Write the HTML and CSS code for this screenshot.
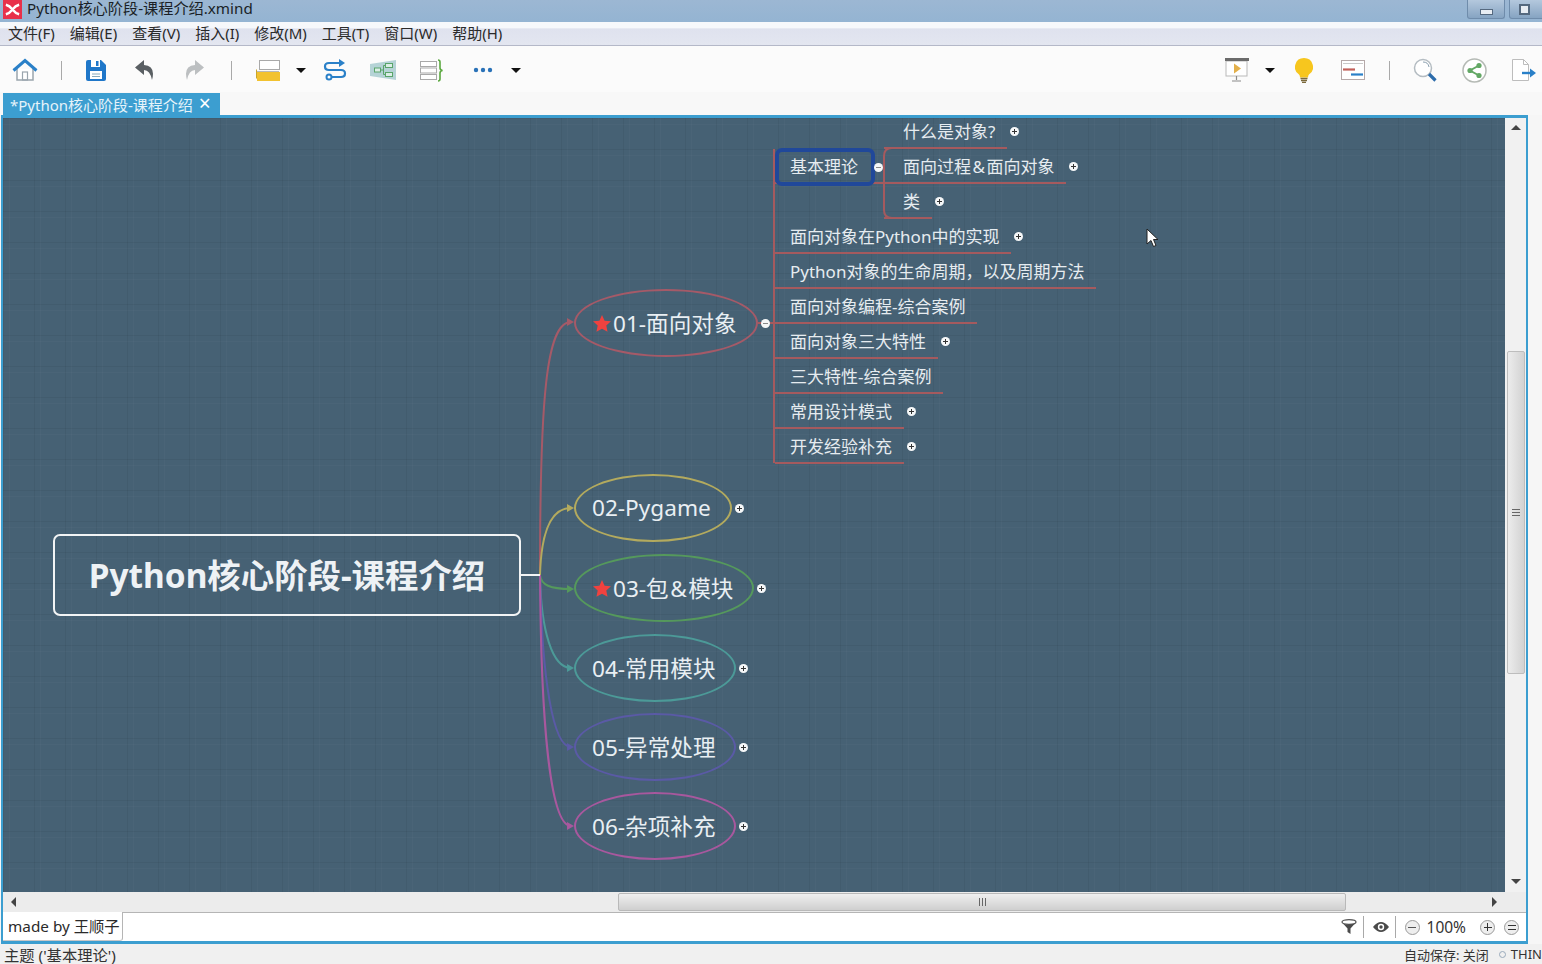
FILE: index.html
```html
<!DOCTYPE html>
<html lang="en">
<head>
  <meta charset="UTF-8">
  <title>Python核心阶段-课程介绍.xmind</title>
  <link rel="stylesheet" href="styles.css">
</head>
<body>

<div class="app">

  <header class="titlebar">
    <svg class="app-logo" viewBox="0 0 20 20">
      <rect width="20" height="20" fill="#e8304a"/>
      <path d="M3 5 Q7 6 10 10 Q13 6 17 5 M3 15 Q7 14 10 10 Q13 14 17 15" fill="none" stroke="#fff" stroke-width="2.600"/>
    </svg>
    <span class="title-text">Python核心阶段-课程介绍.xmind</span>
    <div class="win-btn win-min"><i></i></div>
    <div class="win-btn win-max"><i></i></div>
  </header>

  <nav class="menubar">
    <a>文件(F)</a>
    <a>编辑(E)</a>
    <a>查看(V)</a>
    <a>插入(I)</a>
    <a>修改(M)</a>
    <a>工具(T)</a>
    <a>窗口(W)</a>
    <a>帮助(H)</a>
  </nav>

  <div class="toolbar">
    <div class="tools tools-left">
      <svg width="26" height="24" viewBox="0 0 26 24">
        <path d="M5 11v11h16V11" fill="#fff" stroke="#9aa5ad" stroke-width="1.5"/>
        <rect x="10.500" y="14" width="5" height="8" fill="none" stroke="#9aa5ad" stroke-width="1.2"/>
        <path d="M1.500 12.500 13 2.500l11.500 10" fill="none" stroke="#2a80c8" stroke-width="3"/>
      </svg>
      <i class="sep"></i>
      <svg width="20" height="21" viewBox="0 0 20 21">
        <path d="M0 2q0-2 2-2h13l5 5v14q0 2-2 2H2q-2 0-2-2z" fill="#1f77c9"/>
        <rect x="5" y="0" width="9" height="7" fill="#fff"/>
        <rect x="10" y="1" width="2.500" height="5" fill="#1f77c9"/>
        <rect x="4" y="11" width="12" height="8" fill="#fff"/>
        <path d="M6 14h8M6 16.500h8" stroke="#8ab" stroke-width="1"/>
      </svg>
      <svg width="20" height="22" viewBox="0 0 20 22">
        <path d="M9 1 0 8.500 9 16v-5q6 0 8 10 4-14-8-15z" fill="#5a5f63"/>
      </svg>
      <svg width="20" height="22" viewBox="0 0 20 22">
        <path d="M11 1l9 7.500L11 16v-5q-6 0-8 10Q-1 7 11 6z" fill="#bcbfc1"/>
      </svg>
      <i class="sep"></i>
      <svg width="24" height="21" viewBox="0 0 24 21">
        <rect x="3.500" y=".5" width="20" height="9" fill="#fff" stroke="#a9a9a9"/>
        <path d="M.5 9.500v9" stroke="#c9a52c"/>
        <rect x="1" y="12" width="23" height="9" fill="#f2c230"/>
        <path d="M1 11.500h22" stroke="#b9b9b9"/>
      </svg>
      <i class="caret"></i>
      <svg width="24" height="22" viewBox="0 0 24 22">
        <path d="M20 4H6q-4 0-4 3.500T6 11h12q4 0 4 3.500T18 18H9" fill="none" stroke="#2a80c8" stroke-width="2.200"/>
        <path d="M16 0l6 4-6 4z" fill="#2a80c8"/>
        <circle cx="6" cy="18" r="2.500" fill="#fff" stroke="#2a80c8" stroke-width="2"/>
      </svg>
      <svg width="26" height="20" viewBox="0 0 26 20">
        <path d="M0 4 26 0v20L0 16z" fill="#b5d3d6"/>
        <g fill="#dbeee6" stroke="#5aa56a">
          <rect x="4.500" y="8" width="6" height="4"/>
          <rect x="15.500" y="3.500" width="7" height="4"/>
          <rect x="15.500" y="12.500" width="7" height="4"/>
          <path d="M10.500 10h3M13.500 5.500v9M13.500 5.500h2M13.500 14.500h2" fill="none"/>
        </g>
      </svg>
      <svg width="24" height="23" viewBox="0 0 24 23">
        <g fill="#fff" stroke="#a9a9a9">
          <rect x=".5" y="2.500" width="16" height="5"/>
          <rect x=".5" y="9" width="16" height="5"/>
          <rect x=".5" y="15.500" width="16" height="5"/>
        </g>
        <path d="M18 1q2 0 2 2v6q0 2 2.500 2.500Q20 12 20 14v6q0 2-2 2" fill="none" stroke="#5aa83f" stroke-width="1.600"/>
      </svg>
      <svg width="20" height="6" viewBox="0 0 20 6">
        <circle cx="3" cy="3" r="2.200" fill="#2a72b8"/>
        <circle cx="10" cy="3" r="2.200" fill="#2a72b8"/>
        <circle cx="17" cy="3" r="2.200" fill="#2a72b8"/>
      </svg>
      <i class="caret"></i>
    </div>

    <div class="tools tools-right">
      <svg width="24" height="24" viewBox="0 0 24 24">
        <rect x="1" y="3" width="21" height="15" fill="#fff" stroke="#b9b9b9"/>
        <rect y="0" width="24" height="3" fill="#6b6b6b"/>
        <path d="M9 5.500 16 10.500l-7 5z" fill="#e3b04b"/>
        <path d="M11.500 18v4M7 23h9" stroke="#8a8a8a" stroke-width="1.200"/>
      </svg>
      <i class="caret"></i>
      <svg width="18" height="25" viewBox="0 0 18 25">
        <path d="M9 0a9 9 0 0 1 5 16.500q-1 1-1 3H5q0-2-1-3A9 9 0 0 1 9 0z" fill="#f7c61e"/>
        <path d="M5.500 20.500h7M6 22.500h6M7 24.500h4" stroke="#7c6a3c" stroke-width="1.400"/>
      </svg>
      <svg width="24" height="20" viewBox="0 0 24 20">
        <rect x=".5" y=".5" width="23" height="19" fill="#fff" stroke="#b5a9a9"/>
        <path d="M2 3.500h20" stroke="#c9c9c9"/>
        <path d="M2 9.500h12" stroke="#c2605a" stroke-width="2.200"/>
        <path d="M10 14.500h12" stroke="#2a80c8" stroke-width="2.200"/>
      </svg>
      <i class="sep"></i>
      <svg width="24" height="24" viewBox="0 0 24 24">
        <circle cx="10" cy="10" r="8.500" fill="#fff" stroke="#b4bcc2" stroke-width="1.500"/>
        <path d="M10 4a6 6 0 0 1 6 5" fill="none" stroke="#8ba0b0"/>
        <path d="M16 16l6.500 6.500" stroke="#2d6cab" stroke-width="3.200"/>
      </svg>
      <svg width="25" height="25" viewBox="0 0 25 25">
        <circle cx="12.500" cy="12.500" r="11.500" fill="#fff" stroke="#b5bab5" stroke-width="1.500"/>
        <path d="M17 7.500 8 12.500l9 5" fill="none" stroke="#63a865" stroke-width="2"/>
        <circle cx="17" cy="7.500" r="2.600" fill="#63a865"/>
        <circle cx="8" cy="12.500" r="2.600" fill="#63a865"/>
        <circle cx="17" cy="17.500" r="2.600" fill="#63a865"/>
      </svg>
      <svg width="24" height="22" viewBox="0 0 24 22">
        <path d="M.5.500h11l5 5v16H.500z" fill="#fff" stroke="#bdbdbd"/>
        <path d="M11.500.5v5h5" fill="none" stroke="#bdbdbd"/>
        <path d="M10 14h10" stroke="#2a80c8" stroke-width="2.400"/>
        <path d="M18 9.500l6 4.500-6 4.500z" fill="#2a80c8"/>
      </svg>
    </div>
  </div>

  <div class="tabbar">
    <div class="tab">*Python核心阶段-课程介绍<span class="tab-close">×</span></div>
  </div>

  <main class="frame">
    <div class="work-row">
      <div class="canvas">
        <svg class="links" viewBox="3 118 1502 774">
          <g fill="none" stroke-width="2">
            <path d="M540 575C540 400 546 322 571 322" stroke="#a55a68"/>
            <path d="M540 575C541 540 548 508 571 508" stroke="#b3aa5e"/>
            <path d="M540 575C541 585 550 589 571 589" stroke="#55995c"/>
            <path d="M540 575C541 630 552 668 571 668" stroke="#4c9a98"/>
            <path d="M540 575C542 680 553 747 571 747" stroke="#5a5aa6"/>
            <path d="M540 575C541 720 550 826 571 826" stroke="#a8589e"/>
            <path d="M521 575H540" stroke="#f2f4f5"/>
            <path d="M758 323H773" stroke="#a55a5e"/>
            <path d="M892 148Q884 148 884 156V210Q884 218 892 218" stroke="#a55a5e"/>
            <path d="M773 183H890" stroke="#a55a5e"/>
          </g>
          <g>
            <path d="M574 322l-7-4v8z" fill="#a55a68"/>
            <path d="M574 508l-7-4v8z" fill="#b3aa5e"/>
            <path d="M574 589l-7-4v8z" fill="#55995c"/>
            <path d="M574 668l-7-4v8z" fill="#4c9a98"/>
            <path d="M574 747l-7-4v8z" fill="#5a5aa6"/>
            <path d="M574 826l-7-4v8z" fill="#a8589e"/>
          </g>
        </svg>

        <div class="root-topic">Python核心阶段-课程介绍</div>

        <div class="branch b01">
          <svg class="star" viewBox="0 0 20 19"><path d="M10 0l2.900 6.300 7.100.8-5.200 4.700 1.400 7L10 15.300 3.800 18.800l1.400-7L0 7.100l7.100-.8z"/></svg>
          <span>01-面向对象</span>
          <i class="fold fold-minus"></i>
        </div>
        <div class="branch b02"><span>02-Pygame</span><i class="fold"></i></div>
        <div class="branch b03">
          <svg class="star" viewBox="0 0 20 19"><path d="M10 0l2.900 6.300 7.100.8-5.200 4.700 1.400 7L10 15.300 3.800 18.800l1.400-7L0 7.100l7.100-.8z"/></svg>
          <span>03-包<span class="amp">&amp;</span>模块</span>
          <i class="fold"></i>
        </div>
        <div class="branch b04"><span>04-常用模块</span><i class="fold"></i></div>
        <div class="branch b05"><span>05-异常处理</span><i class="fold"></i></div>
        <div class="branch b06"><span>06-杂项补充</span><i class="fold"></i></div>

        <div class="sub-list">
          <div class="sub sub-selected"><span class="sub-label">基本理论</span><i class="fold fold-minus"></i></div>
          <div class="sub"><span class="sub-label">面向对象在Python中的实现</span><i class="fold"></i></div>
          <div class="sub"><span class="sub-label">Python对象的生命周期，以及周期方法</span></div>
          <div class="sub"><span class="sub-label">面向对象编程-综合案例</span></div>
          <div class="sub"><span class="sub-label">面向对象三大特性</span><i class="fold"></i></div>
          <div class="sub"><span class="sub-label">三大特性-综合案例</span></div>
          <div class="sub"><span class="sub-label">常用设计模式</span><i class="fold"></i></div>
          <div class="sub"><span class="sub-label">开发经验补充</span><i class="fold"></i></div>
        </div>

        <div class="leaf-list">
          <div class="sub"><span class="sub-label">什么是对象?</span><i class="fold"></i></div>
          <div class="sub"><span class="sub-label">面向过程<span class="amp">&amp;</span>面向对象</span><i class="fold"></i></div>
          <div class="sub"><span class="sub-label">类</span><i class="fold"></i></div>
        </div>

        <svg class="pointer" width="13" height="20" viewBox="0 0 13 20">
          <path d="M1 1v15l4-3.500 2.500 6 2.500-1-2.500-6H12z" fill="#fff" stroke="#222" stroke-width="1"/>
        </svg>
      </div>

      <div class="vscroll">
        <i class="arrow arrow-up"></i>
        <div class="vthumb"><b class="grip-h"></b></div>
        <i class="arrow arrow-down"></i>
      </div>
    </div>

    <div class="hscroll">
      <i class="arrow arrow-left"></i>
      <div class="hthumb"><b class="grip-v"></b></div>
      <i class="arrow arrow-right"></i>
    </div>

    <div class="infobar">
      <div class="author">made by 王顺子</div>
      <div class="info-tools">
        <svg width="16" height="16" viewBox="0 0 16 16">
          <ellipse cx="8" cy="3" rx="7" ry="2.300" fill="#fff" stroke="#555" stroke-width="1.300"/>
          <path d="M2 4.500q4 2 12 0L9.500 9.500V15l-3-2V9.500z" fill="#4a4a4a"/>
        </svg>
        <i class="info-sep"></i>
        <svg class="eye" width="16" height="12" viewBox="0 0 16 12">
          <path d="M0 6q8-10 16 0-8 10-16 0z" fill="#4a4a4a"/>
          <circle cx="8" cy="6" r="3.200" fill="#fff"/>
          <circle cx="8" cy="6" r="1.700" fill="#4a4a4a"/>
        </svg>
        <i class="info-sep"></i>
        <i class="round-btn round-minus"></i>
        <span class="zoom-value">100%</span>
        <i class="round-btn round-plus"></i>
        <i class="round-btn round-menu"></i>
      </div>
    </div>
  </main>

  <footer class="statusbar">
    <span>主题 ('基本理论')</span>
    <span class="status-right">自动保存: 关闭<i class="status-dot"></i>THIN</span>
  </footer>

</div>

</body>
</html>
```

FILE: styles.css
```css
html, body {
  margin: 0;
  height: 100%;
  overflow: hidden;
}
body {
  font-family: "Noto Sans", "Noto Sans CJK SC", sans-serif;
  color: #222;
  background-color: #f6f6f6;
}
.app {
  display: flex;
  flex-direction: column;
  height: 964px;
}

/* window chrome */
.titlebar {
  height: 22px;
  display: flex;
  align-items: flex-start;
  background: linear-gradient(to bottom, #9cb7d3, #94b4d2);
  flex: none;
}
.app-logo {
  width: 19px;
  height: 19px;
  margin-left: 3px;
}
.title-text {
  margin-left: 5px;
  font-size: 15.2px;
  line-height: 17px;
  color: #1a1f26;
}
.win-btn {
  height: 18px;
  border: 1px solid #6f8cab;
  border-top: none;
  border-radius: 0 0 3px 3px;
  background: linear-gradient(to bottom, #b4c8dd, #86a4c2);
  display: flex;
  align-items: center;
  justify-content: center;
}
.win-min {
  width: 36px;
  margin-left: auto;
}
.win-max {
  width: 36px;
  margin-left: 4px;
  margin-right: -5px;
}
.win-min i {
  width: 11px;
  height: 4px;
  background: #e8edf3;
  border: 1px solid #55697f;
  margin-top: 6px;
}
.win-max i {
  width: 7px;
  height: 7px;
  background: #e8edf3;
  border: 2px solid #55697f;
  margin-right: 8px;
}
.menubar {
  height: 23px;
  flex: none;
  display: flex;
  align-items: center;
  padding-left: 8px;
  gap: 15px;
  font-size: 15px;
  line-height: 23px;
  color: #2a2a2a;
  background: linear-gradient(to bottom, #f6f8fb 0, #f6f8fb 25%, #dfe2ee 30%, #e3e6f0 100%);
  border-bottom: 1px solid #b4b8c8;
}
.toolbar {
  height: 44px;
  padding-top: 2px;
  flex: none;
  display: flex;
  align-items: center;
  justify-content: space-between;
  background-color: #fbfbfb;
}
.tools {
  display: grid;
  align-items: center;
  justify-items: center;
}
.tools-left {
  grid-template-columns: 50px 22px 48px 50px 48px 26px 48px 18px 50px 46px 52px 50px 16px;
}
.tools-right {
  grid-template-columns: 48px 18px 50px 48px 24px 48px 50px 50px;
  margin-right: -7px;
}
.sep {
  display: block;
  width: 1px;
  height: 19px;
  background-color: #a9a9a9;
}
.caret {
  display: block;
  width: 0;
  height: 0;
  border-left: 5px solid transparent;
  border-right: 5px solid transparent;
  border-top: 5px solid #111;
}
.tabbar {
  height: 23px;
  flex: none;
  background-color: #f8f8f8;
  display: flex;
  align-items: flex-end;
  padding-left: 3px;
}
.tab {
  width: 217px;
  height: 22px;
  box-sizing: border-box;
  padding-left: 7px;
  font-size: 15px;
  line-height: 25px;
  color: #e6f3fa;
  background-color: #3c9ed0;
  white-space: nowrap;
}
.tab-close {
  margin-left: 6px;
  font-size: 21px;
  line-height: 18px;
  color: #fff;
}

/* main frame */
.frame {
  height: 829px;
  flex: none;
  box-sizing: border-box;
  margin: 0 14px 0 1px;
  border: 2px solid #3c9ed0;
  border-top-width: 3px;
  border-bottom-width: 3px;
  display: flex;
  flex-direction: column;
  background-color: #f0f0f0;
}
.work-row {
  height: 774px;
  display: flex;
  flex: none;
}
.canvas {
  position: relative;
  width: 1502px;
  height: 774px;
  overflow: hidden;
  background-color: #466174;
  background-image:
    linear-gradient(to right, rgba(0, 0, 0, 0.05) 1px, transparent 1px),
    linear-gradient(to bottom, rgba(0, 0, 0, 0.05) 1px, transparent 1px),
    linear-gradient(to right, rgba(255, 255, 255, 0.02) 1px, transparent 1px),
    linear-gradient(to bottom, rgba(255, 255, 255, 0.02) 1px, transparent 1px);
  background-size: 31px 31px, 31px 31px, 31px 31px, 31px 31px;
  background-position: 0 0, 0 0, 6px 6px, 6px 6px;
}
.links {
  position: absolute;
  left: 0;
  top: 0;
  width: 1502px;
  height: 774px;
}
.root-topic {
  position: absolute;
  left: 50px;
  top: 416px;
  width: 468px;
  height: 82px;
  box-sizing: border-box;
  border: 2px solid #f2f4f5;
  border-radius: 7px;
  text-align: center;
  font-size: 33.4px;
  line-height: 78px;
  font-weight: 700;
  color: #eef2f5;
  white-space: nowrap;
}
.branch {
  position: absolute;
  left: 571px;
  height: 68px;
  box-sizing: border-box;
  border: 2px solid;
  border-radius: 50%;
  display: flex;
  align-items: center;
  padding: 0 0 2px 16px;
  font-size: 22.6px;
  color: #e9eff3;
  white-space: nowrap;
}
.b01 { top: 171px; width: 184px; padding-left: 17px; border-color: #a55a68; }
.b02 { top: 356px; width: 158px; border-color: #b3aa5e; }
.b03 { top: 436px; width: 180px; padding-left: 17px; border-color: #55995c; }
.b04 { top: 516px; width: 162px; border-color: #4c9a98; }
.b05 { top: 595px; width: 162px; border-color: #5a5aa6; }
.b06 { top: 674px; width: 162px; border-color: #a8589e; }
.star {
  width: 18px;
  height: 17px;
  margin-right: 2px;
  margin-top: 2px;
  flex: none;
}
.star path {
  fill: #f0423f;
}
.amp {
  padding: 0 1.5px;
}
.fold {
  display: block;
  width: 9px;
  height: 9px;
  border-radius: 50%;
  flex: none;
  background-color: #f5f7f8;
  background-image:
    linear-gradient(#333, #333),
    linear-gradient(#333, #333);
  background-size: 5px 1px, 1px 5px;
  background-position: center;
  background-repeat: no-repeat;
}
.fold-minus {
  background-image: linear-gradient(#888, #888);
  background-size: 5px 1px;
}
.branch .fold {
  position: absolute;
  top: 28px;
  right: -14px;
}
.sub-list {
  position: absolute;
  left: 770px;
  top: 31px;
  height: 314px;
  border-left: 2px solid #a55a5e;
  font-size: 17px;
  display: flex;
  flex-direction: column;
}
.leaf-list {
  position: absolute;
  left: 881px;
  top: -4px;
  font-size: 17px;
  display: flex;
  flex-direction: column;
}
.sub {
  display: flex;
  align-items: center;
  height: 35px;
  color: #e6ecf0;
}
.sub-label {
  box-sizing: border-box;
  height: 35px;
  line-height: 35px;
  padding: 0 12px 0 15px;
  border-bottom: 2px solid #a55a5e;
  white-space: nowrap;
}
.leaf-list .sub-label {
  padding-left: 19px;
}
.sub .fold {
  margin-left: 3px;
}
.sub-selected {
  margin-bottom: 35px;
  position: relative;
}
.sub-selected .sub-label {
  width: 100px;
  height: 38px;
  line-height: 30px;
  padding-left: 11px;
  border: 4px solid #20489a;
  border-radius: 7px;
  margin-top: 1px;
}
.sub-selected .fold {
  position: absolute;
  left: 99px;
  top: 14px;
  margin: 0;
}
.pointer {
  position: absolute;
  left: 1143px;
  top: 110px;
}

/* scrollbars */
.vscroll {
  width: 21px;
  display: flex;
  flex-direction: column;
  align-items: center;
  background-color: #f1f1f1;
}
.vthumb {
  width: 18px;
  height: 323px;
  margin-top: 221px;
  box-sizing: border-box;
  border: 1px solid #bdbdbd;
  border-radius: 2px;
  background: linear-gradient(to right, #ececec, #d2d2d2);
  display: flex;
  align-items: center;
  justify-content: center;
}
.grip-h {
  width: 8px;
  height: 7px;
  background: repeating-linear-gradient(to bottom, #666 0, #666 1px, transparent 1px, transparent 3px);
}
.grip-v {
  width: 7px;
  height: 8px;
  background: repeating-linear-gradient(to right, #666 0, #666 1px, transparent 1px, transparent 3px);
}
.arrow {
  display: block;
  width: 0;
  height: 0;
  flex: none;
}
.arrow-up {
  margin-top: 7px;
  border-left: 5px solid transparent;
  border-right: 5px solid transparent;
  border-bottom: 5px solid #444;
}
.arrow-down {
  margin-top: auto;
  margin-bottom: 8px;
  border-left: 5px solid transparent;
  border-right: 5px solid transparent;
  border-top: 5px solid #444;
}
.arrow-left {
  margin-left: 8px;
  border-top: 5px solid transparent;
  border-bottom: 5px solid transparent;
  border-right: 5px solid #444;
}
.arrow-right {
  margin-left: auto;
  margin-right: 29px;
  border-top: 5px solid transparent;
  border-bottom: 5px solid transparent;
  border-left: 5px solid #444;
}
.hscroll {
  height: 20px;
  flex: none;
  display: flex;
  align-items: center;
  background-color: #ececec;
}
.hthumb {
  width: 728px;
  height: 18px;
  margin-left: 602px;
  box-sizing: border-box;
  border: 1px solid #b9b9b9;
  border-radius: 2px;
  background: linear-gradient(to bottom, #efefef, #cfcfcf);
  display: flex;
  align-items: center;
  justify-content: center;
}

/* bottom bars */
.infobar {
  height: 29px;
  flex: none;
  display: flex;
  align-items: stretch;
  background-color: #fff;
  border-top: 1px solid #b5b5b5;
  box-sizing: border-box;
}
.author {
  width: 120px;
  box-sizing: border-box;
  margin-top: -1px;
  padding-left: 5px;
  font-size: 15.3px;
  line-height: 28px;
  color: #2a2a2a;
  background-color: #fff;
  border-right: 1px solid #b5b5b5;
  border-bottom: 1px solid #c8c8c8;
  border-radius: 0 0 3px 0;
  white-space: nowrap;
}
.info-tools {
  margin-left: auto;
  display: flex;
  align-items: center;
  padding-right: 7px;
  font-size: 15.5px;
  color: #333;
}
.info-sep {
  display: block;
  width: 1px;
  height: 22px;
  margin: 0 6px;
  background-color: #a9a9a9;
}
.eye {
  margin-left: 3px;
}
.round-btn {
  display: block;
  width: 13px;
  height: 13px;
  border-radius: 50%;
  border: 1px solid #9a9a9a;
  background-color: #eee;
  background-repeat: no-repeat;
  background-position: center;
  margin-left: 9px;
}
.round-minus {
  margin-left: 3px;
  background-image: linear-gradient(#555, #555);
  background-size: 8px 1px;
}
.round-plus {
  margin-left: 14px;
  background-image: linear-gradient(#333, #333), linear-gradient(#333, #333);
  background-size: 8px 1px, 1px 8px;
}
.round-menu {
  background-image: linear-gradient(#333, #333), linear-gradient(#333, #333);
  background-size: 8px 1px;
  background-position: center 4px, center 8px;
}
.zoom-value {
  margin-left: 7px;
}
.statusbar {
  height: 20px;
  flex: none;
  display: flex;
  justify-content: space-between;
  align-items: center;
  padding-left: 4px;
  font-size: 15.3px;
  color: #333;
  background-color: #f0f0f0;
  white-space: nowrap;
}
.status-right {
  font-size: 13px;
  display: flex;
  align-items: center;
  margin-right: 0;
}
.status-dot {
  display: block;
  width: 5px;
  height: 5px;
  margin: 0 5px 0 10px;
  border-radius: 50%;
  border: 1px solid #9ab;
}
```
